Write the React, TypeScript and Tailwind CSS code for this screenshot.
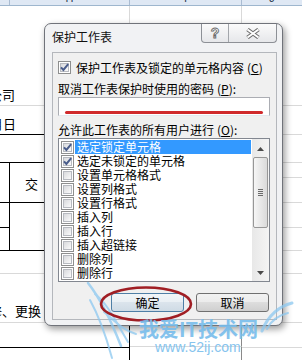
import React from "react";

function Check({ checked }: { checked?: boolean }) {
  return (
    <div className="relative w-[13px] h-[13px] shrink-0 border border-[#8e8f8f] bg-white">
      <div className="absolute inset-[1px] border border-[#b7bac0] bg-gradient-to-br from-[#d8d9dc] to-[#fbfbfb]" />
      {checked && (
        <svg className="absolute left-0 top-0" width="11" height="11" viewBox="0 0 11 11">
          <path d="M2 5.3 L4.4 8 L9.2 2.1" fill="none" stroke="#4a5d8b" strokeWidth="2" />
        </svg>
      )}
    </div>
  );
}

const items: [string, boolean][] = [
  ["选定锁定单元格", true],
  ["选定未锁定的单元格", true],
  ["设置单元格格式", false],
  ["设置列格式", false],
  ["设置行格式", false],
  ["插入列", false],
  ["插入行", false],
  ["插入超链接", false],
  ["删除列", false],
  ["删除行", false],
];

export default function App() {
  return (
    <div className="relative w-[302px] h-[360px] overflow-hidden bg-white text-black font-['Noto_Sans_CJK_SC','Noto_Sans',sans-serif]">
      {/* column header */}
      <div className="flex h-[6px] overflow-hidden border-b border-[#9eb6ce] bg-[#dfe8f4] text-[11px] text-[#2b3a4f] font-['Liberation_Sans',sans-serif]">
        <div className="w-[10px] border-r border-[#aabcd2]" />
        <div className="w-[120px] border-r border-[#aabcd2] flex justify-center">
          <span className="-mt-[8px] leading-[12px]">H</span>
        </div>
        <div className="w-[112px] border-r border-[#aabcd2] flex justify-center">
          <span className="-mt-[8px] leading-[12px]">I</span>
        </div>
        <div className="flex-1 flex justify-center">
          <span className="-mt-[8px] leading-[12px]">J</span>
        </div>
      </div>

      {/* sheet body */}
      <div className="flex text-[13px] leading-[16px]">
        {/* column H */}
        <div className="w-[130px] flex flex-col">
          <div className="h-[100px] border-b border-r border-[#d9d9d9] flex items-end pb-[2px]">
            <div className="w-[15px] flex justify-end">
              <span className="whitespace-nowrap">有限公司</span>
            </div>
          </div>
          <div className="h-[29px] border-b border-b-black border-r border-r-[#d9d9d9] flex items-end pb-[2px]">
            <div className="w-[16px] flex justify-end">
              <span className="whitespace-nowrap">年月日</span>
            </div>
          </div>
          <div className="h-[28px] border-b border-b-black border-r border-r-[#d9d9d9]" />
          <div className="h-[40px] border-b border-b-black border-r border-r-[#d9d9d9] flex">
            <div className="w-[10px] h-full border-r border-black" />
            <div className="self-center pl-[15px] pt-[3px]">交</div>
          </div>
          <div className="h-[48px] border-b border-b-black border-r border-r-[#d9d9d9] flex">
            <div className="w-[10px] h-full border-r border-black flex flex-col">
              <div className="h-[25px] border-b border-black" />
            </div>
          </div>
          <div className="h-[23px] border-b border-r border-[#d9d9d9]" />
          <div className="h-[49px] border-b border-r border-[#d9d9d9] flex items-end pb-[3px]">
            <div className="w-[41px] flex justify-end">
              <span className="whitespace-nowrap">修、更换</span>
            </div>
          </div>
          <div className="h-[25px] border-b border-r border-black" />
          <div className="h-[20px] border-r border-black" />
        </div>
        {/* column I */}
        <div className="w-[112px] flex flex-col">
          <div className="h-[316px] border-b border-r border-[#d9d9d9]" />
          <div className="h-[25px] border-b border-[#d9d9d9] border-r border-r-[#8a8a8a]" />
          <div className="h-[20px] border-r border-[#8a8a8a]" />
        </div>
        {/* column J */}
        <div className="flex-1 flex flex-col">
          <div className="h-[100px] border-b border-[#d9d9d9]" />
          <div className="h-[29px] border-b border-[#d9d9d9]" />
          <div className="h-[28px] border-b border-[#d9d9d9]" />
          <div className="h-[15px] border-b border-[#d9d9d9]" />
          <div className="h-[25px] border-b border-[#d9d9d9]" />
          <div className="h-[25px] border-b border-[#d9d9d9]" />
          <div className="h-[23px] border-b border-[#d9d9d9]" />
          <div className="h-[23px] border-b border-[#d9d9d9]" />
          <div className="h-[49px] border-b border-[#d9d9d9]" />
          <div className="h-[25px] border-b border-[#d9d9d9]" />
        </div>
      </div>

      {/* dialog */}
      <div className="absolute left-[44px] top-[23px] w-[239px] h-[303px] rounded-[7px] border border-[#70737a] bg-[#f1f2f4] shadow-[2px_3px_7px_rgba(0,0,0,0.4)] flex flex-col">
        <div className="h-[28px] flex items-start">
          <div className="pl-[7px] pt-[5px] text-[12px] leading-[16px] text-[#111]">保护工作表</div>
          <div className="ml-auto mr-[5px] flex h-[19px] rounded-b-[4px] border border-t-0 border-[#8d9096] bg-gradient-to-b from-[#fbfbfb] to-[#e6e7ea] overflow-hidden">
            <div className="w-[27px] border-r border-[#a3a6ab] flex items-center justify-center">
              <span className="text-[14px] leading-[16px] font-bold text-white font-['Liberation_Sans',sans-serif] [-webkit-text-stroke:0.9px_#6a6a6a]">?</span>
            </div>
            <div className="w-[47px] flex items-center justify-center">
              <svg width="16" height="11" viewBox="0 0 16 11">
                <path d="M2.5 1.5 L13.5 9.5 M13.5 1.5 L2.5 9.5" stroke="#6e6e6e" strokeWidth="4" fill="none" />
                <path d="M2.5 1.5 L13.5 9.5 M13.5 1.5 L2.5 9.5" stroke="#ffffff" strokeWidth="2" fill="none" />
              </svg>
            </div>
          </div>
        </div>

        <div className="ml-[7px] w-[225px] h-[268px] border border-[#b4b7bc] bg-[#f0f0f0] flex flex-col text-[12px] leading-[14px]">
          <div className="mt-[8px] ml-[5px] flex items-center gap-[5px] h-[13px]">
            <Check checked />
            <span className="whitespace-nowrap">
              保护工作表及锁定的单元格内容<span className="ml-[3px]">(<span className="underline">C</span>)</span>
            </span>
          </div>
          <div className="mt-[8px] ml-[5px] whitespace-nowrap">
            取消工作表保护时使用的密码<span className="ml-[3px]">(<span className="underline">P</span>):</span>
          </div>
          <div className="mt-[1px] ml-[5px] w-[212px] h-[19px] border border-[#abadb3] border-b-[#e3e9ef] bg-white pt-[13px] px-[6px]">
            <div className="h-[3px] rounded-full bg-[#d02a2c]" />
          </div>
          <div className="mt-[7px] ml-[5px] whitespace-nowrap">
            允许此工作表的所有用户进行<span className="ml-[3px]">(<span className="underline">O</span>):</span>
          </div>
          <div className="mt-[1px] ml-[5px] w-[212px] h-[144px] border border-[#828790] bg-white flex">
            <div className="flex-1 flex flex-col pt-[1px]">
              {items.map(([label, checked], i) => (
                <div key={label} className="flex h-[14px]">
                  <div className="w-[16px] pl-[2px] flex items-center">
                    <Check checked={checked} />
                  </div>
                  <div
                    className={
                      i === 0
                        ? "w-[176px] pl-[2px] bg-[#3399ff] text-white whitespace-nowrap"
                        : "w-[176px] pl-[2px] whitespace-nowrap"
                    }
                  >
                    {label}
                  </div>
                </div>
              ))}
            </div>
            <div className="w-[17px] flex flex-col bg-gradient-to-r from-[#e8e8e8] to-[#f4f4f4]">
              <div className="h-[17px] flex items-center justify-center pt-[2px]">
                <svg width="7" height="4" viewBox="0 0 7 4">
                  <path d="M0 4 L3.5 0 L7 4Z" fill="#4a4a4a" />
                </svg>
              </div>
              <div className="mt-[1px] mx-[1px] h-[71px] rounded-[2px] border border-[#979797] bg-gradient-to-r from-[#f6f6f6] to-[#dadada] flex flex-col items-center justify-center gap-[1px]">
                <div className="w-[5px] h-[1px] bg-[#6a6a6a]" />
                <div className="w-[5px] h-[1px] bg-[#6a6a6a]" />
                <div className="w-[5px] h-[1px] bg-[#6a6a6a]" />
                <div className="w-[5px] h-[1px] bg-[#6a6a6a]" />
              </div>
              <div className="flex-1" />
              <div className="h-[17px] flex items-center justify-center">
                <svg width="7" height="4" viewBox="0 0 7 4">
                  <path d="M0 0 L3.5 4 L7 0Z" fill="#4a4a4a" />
                </svg>
              </div>
            </div>
          </div>
          <div className="mt-[11px] ml-[58px] flex gap-[12px]">
            <div className="w-[73px] h-[19px] rounded-[3px] border border-[#4f7fa6] bg-[linear-gradient(#f1f5f8,#e9eff4_50%,#dbe4ec_50%,#cfdbe5)] flex items-center justify-center">
              确定
            </div>
            <div className="w-[73px] h-[19px] rounded-[3px] border border-[#707070] bg-[linear-gradient(#f2f2f2,#ebebeb_50%,#dddddd_50%,#cfcfcf)] flex items-center justify-center">
              取消
            </div>
          </div>
        </div>
      </div>

      {/* annotation + watermark drawings */}
      <svg className="absolute left-0 top-0 pointer-events-none" width="302" height="360" viewBox="0 0 302 360">
        <g fill="none" stroke="#8cc8f0" strokeLinecap="round" opacity="0.75">
          <path d="M88 283 C100 298 110 318 121 346" strokeWidth="2.5" />
          <path d="M95 294 C108 304 116 322 128 342" strokeWidth="2" />
          <path d="M90 300 C100 318 106 336 112 358" strokeWidth="2" />
          <path d="M104 312 C114 320 122 330 136 334" strokeWidth="2" />
          <path d="M292 303 C280 306 268 315 262 331" strokeWidth="3" />
          <path d="M288 313 C279 315 271 321 267 329" strokeWidth="2" />
        </g>
        <ellipse cx="146" cy="304" rx="45" ry="16.5" fill="none" stroke="#a01e24" strokeWidth="2.6" />
      </svg>
      <div className="absolute left-[139px] top-[318px] pointer-events-none text-[20px] leading-[21px] font-bold text-[#78bdec] opacity-90 whitespace-nowrap">
        我爱IT技术网
      </div>
      <div className="absolute left-[155px] top-[340px] pointer-events-none text-[14px] leading-[14px] text-[#86c4ee] font-['Liberation_Sans',sans-serif] whitespace-nowrap">
        www.52ij.com
      </div>
    </div>
  );
}
